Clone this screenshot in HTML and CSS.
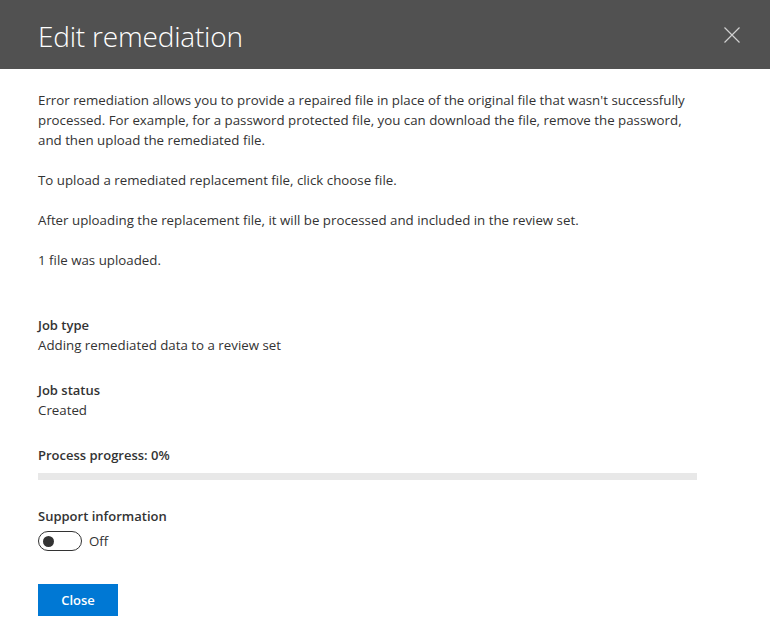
FILE: index.html
```html
<!DOCTYPE html>
<html>
<head>
<meta charset="utf-8">
<link rel="stylesheet" href="styles.css">
</head>
<body>
<div class="panel">
  <header class="header">
    <h1 class="title">Edit remediation</h1>
    <button class="close-x" aria-label="Close">
      <svg width="16" height="16" viewBox="0 0 16 16"><path d="M0.5 0.5 L15.5 15.5 M15.5 0.5 L0.5 15.5" stroke="#d0d0d0" stroke-width="1.2" fill="none"/></svg>
    </button>
  </header>
  <main class="content">
    <p class="para">Error remediation allows you to provide a repaired file in place of the original file that wasn't successfully<br>processed. For example, for a password protected file, you can download the file, remove the password,<br>and then upload the remediated file.</p>
    <p class="para">To upload a remediated replacement file, click choose file.</p>
    <p class="para">After uploading the replacement file, it will be processed and included in the review set.</p>
    <p class="para">1 file was uploaded.</p>

    <div class="field first">
      <div class="label">Job type</div>
      <div class="value">Adding remediated data to a review set</div>
    </div>
    <div class="field">
      <div class="label">Job status</div>
      <div class="value">Created</div>
    </div>
    <div class="field">
      <div class="label">Process progress: 0%</div>
      <div class="bar"><div class="bar-fill" style="width:0%"></div></div>
    </div>
    <div class="field support">
      <div class="label">Support information</div>
      <div class="toggle-row">
        <span class="toggle"><span class="knob"></span></span>
        <span class="toggle-text">Off</span>
      </div>
    </div>
    <button class="btn-primary">Close</button>
  </main>
</div>
</body>
</html>
```
FILE: styles.css
```css
* { box-sizing: border-box; }
html, body { margin: 0; padding: 0; background: #fff; }
body { font-family: "Open Sans", "Noto Sans", sans-serif; color: #333; }
.panel { width: 770px; }
.header {
  height: 69px;
  background: #515151;
  display: flex;
  align-items: center;
  justify-content: space-between;
  padding: 0 30px 0 38px;
}
.title {
  margin: 0;
  font-weight: 300;
  font-size: 28px;
  color: #fff;
  letter-spacing: -0.2px;
  padding-top: 3px;
}
.close-x {
  background: none; border: 0; padding: 0; width: 16px; height: 16px;
  display: flex;
}
.content { padding: 21px 38px 0 38px; font-size: 13.3px; }
.para { margin: 0 0 20px 0; line-height: 20px; }
.field { margin-top: 0; margin-bottom: 25px; line-height: 20px; }
.field.first { margin-top: 45px; }
.label { font-weight: 600; font-size: 13px; }
.value { font-size: 13.3px; }
.bar { margin-top: 8px; width: 659px; height: 7px; background: #e8e8e8; }
.bar-fill { height: 100%; background: #0078d4; }
.field.support { margin-top: 26px; margin-bottom: 0; }
.toggle-row { display: flex; align-items: center; gap: 7px; margin-top: 5px; }
.toggle {
  width: 44px; height: 20px; border: 1px solid #333; border-radius: 10px;
  display: flex; align-items: center; padding-left: 4px;
}
.knob { width: 11px; height: 11px; border-radius: 50%; background: #333; }
.btn-primary {
  display: block;
  margin-top: 33px;
  width: 80px; height: 32px; background: #0078d4; color: #fff; border: 0;
  font-family: inherit; font-size: 13px; font-weight: 600;
}
```
